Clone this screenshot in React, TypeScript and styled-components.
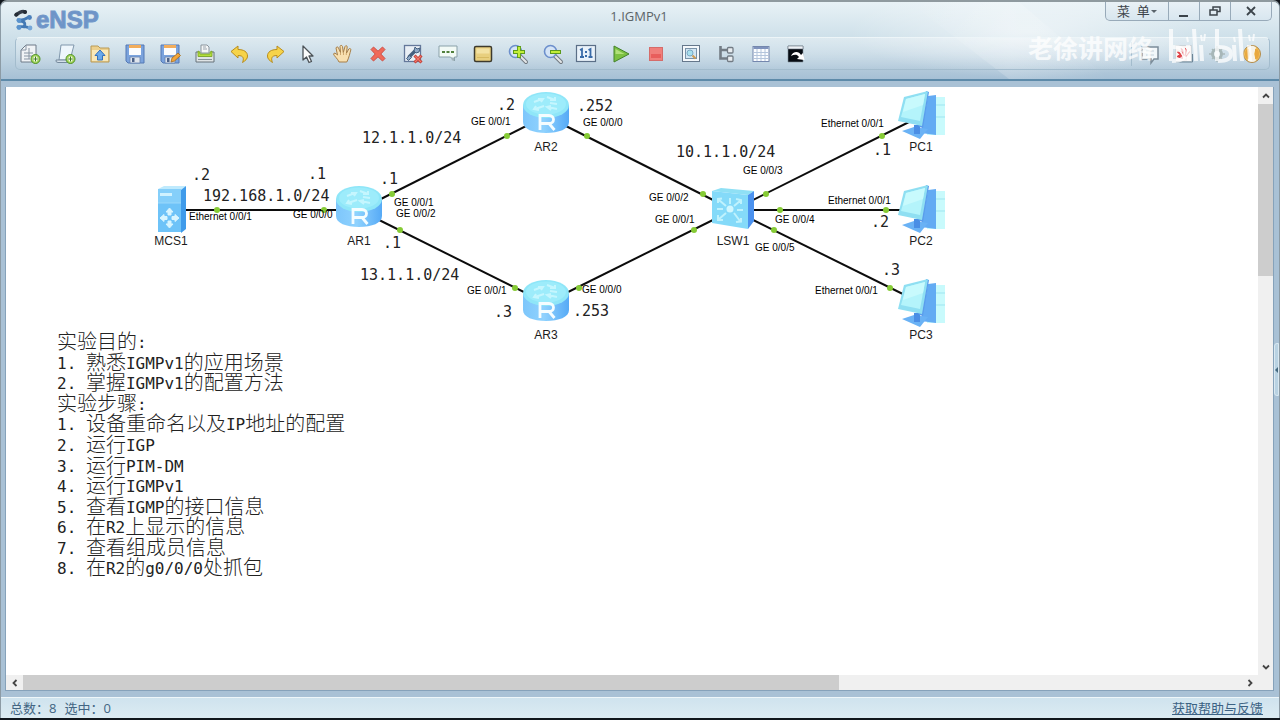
import React from "react";
import styled, { createGlobalStyle } from "styled-components";

const GlobalStyle = createGlobalStyle`
  * { box-sizing: border-box; }
  body { margin: 0; background: #10161c; font-family: "Open Sans", "Noto Sans CJK SC", sans-serif; }
  button { font: inherit; color: inherit; }
`;

const Window = styled.div`
  display: flex;
  flex-direction: column;
  height: 100vh;
  min-height: 520px;
  padding-bottom: 2px;
  background: #10161c;
`;

const Frame = styled.div`
  flex: 1;
  display: flex;
  flex-direction: column;
  min-height: 0;
  overflow: hidden;
  border: 1px solid #8c9ba5;
  border-top: 2px solid #8f9a9f;
  border-bottom: 0;
  border-radius: 7px 7px 0 0;
  background: #a9c1d5;
`;

const Header = styled.header`
  position: relative;
  flex: none;
  height: 79px;
  border-bottom: 2px solid #5d8aa9;
  background: linear-gradient(#e8f2f6 0, #cfe1ea 34px, #c3d7e4 52px, #b3cadb 66px, #a6c0d5 77px);
`;

const Decor = styled.svg`
  position: absolute;
  top: 0;
  right: 0;
  width: 640px;
  height: 77px;
`;

const TitleBar = styled.div`
  position: relative;
  display: grid;
  grid-template-columns: 1fr auto 1fr;
  height: 35px;
  padding: 0 7px 0 5px;
`;

const Brand = styled.div`
  display: flex;
  align-items: center;
  gap: 2px;
  padding-left: 8px;
  font: 900 24px/35px "Liberation Sans", Arial, sans-serif;
  color: #6e94c8;
  -webkit-text-stroke: 1px #7398c9;
`;

const Title = styled.h1`
  margin: 0;
  font-size: 13px;
  font-weight: 400;
  line-height: 29px;
  color: #5c6468;
`;

const Controls = styled.div`
  justify-self: end;
  display: flex;
  height: 19px;
  border: 1px solid #98aab9;
  border-top: 0;
  border-radius: 0 0 5px 5px;
  background: linear-gradient(#e9f1f6, #d8e6ef);
  overflow: hidden;
`;

const Control = styled.button<{ $w: number }>`
  display: flex;
  align-items: center;
  justify-content: center;
  width: ${(p) => p.$w}px;
  padding: 0;
  border: 0;
  border-right: 1px solid #98aab9;
  background: none;
  color: #3d444a;
  font-size: 13px;
  line-height: 18px;
  white-space: pre;
  &:last-child { border-right: 0; }
`;

const Toolbar = styled.div`
  position: relative;
  display: flex;
  align-items: center;
  height: 33px;
  margin: 0 9px 0 14px;
  padding: 0 5px 0 2px;
  border: 1px solid #a3bccd;
  border-top-color: #edf5f8;
  border-radius: 5px;
  background: linear-gradient(#ffffff50, #ffffff08);
`;

const Group = styled.div<{ $line?: boolean; $gap?: number }>`
  display: flex;
  gap: ${(p) => p.$gap ?? 11}px;
  & + & {
    margin-left: 4px;
    padding-left: 4px;
    border-left: 1px solid ${(p) => (p.$line ? "#9fb5c6" : "transparent")};
  }
`;

const SideGroup = styled(Group)`
  && {
    margin-left: auto;
    padding-left: 6px;
    border-left: 1px solid #a3bccd;
  }
`;

const Tool = styled.button`
  display: flex;
  align-items: center;
  justify-content: center;
  width: 24px;
  height: 24px;
  padding: 0;
  border: 0;
  background: none;
`;

const Watermark = styled.div`
  position: absolute;
  right: 20px;
  top: 23px;
  display: flex;
  align-items: center;
  gap: 14px;
  font: 700 25px/44px "Noto Sans CJK SC", sans-serif;
  color: #ffffff;
  opacity: 0.75;
  pointer-events: none;
`;

const Body = styled.main`
  position: relative;
  flex: 1;
  min-height: 0;
  display: grid;
  grid-template: minmax(0, 1fr) 15px / minmax(0, 1fr) 15px;
  margin: 6px 5px 6px 4px;
  border: 1px solid #86a2ba;
  border-top: 0;
  background: #ffffff;
`;

const Canvas = styled.section`
  position: relative;
  overflow: hidden;
  background: #ffffff;
`;

const Links = styled.svg`
  position: absolute;
  inset: 0;
  width: 100%;
  height: 100%;
`;

const Node = styled.div<{ $x: number; $y: number }>`
  position: absolute;
  left: ${(p) => p.$x}px;
  top: ${(p) => p.$y}px;
  width: 80px;
  margin-left: -40px;
  display: flex;
  flex-direction: column;
  align-items: center;
  font: 12px/16px "Liberation Sans", Arial, sans-serif;
  color: #1c1c1c;
`;

const PortLabel = styled.span<{ $x: number; $y: number }>`
  position: absolute;
  left: ${(p) => p.$x}px;
  top: ${(p) => p.$y}px;
  margin-top: -8px;
  font: 10px/16px "Liberation Sans", Arial, sans-serif;
  color: #000000;
  white-space: nowrap;
`;

const NetLabel = styled(PortLabel)`
  font: 15px/16px "DejaVu Sans Mono", monospace;
  color: #222222;
`;

const Notes = styled.div`
  position: absolute;
  left: 51px;
  top: 245px;
  display: grid;
  grid-template-rows: repeat(12, minmax(0, 1fr));
  height: 247px;
  font: 300 20px/20px "Liberation Sans", "Noto Sans CJK SC", sans-serif;
  color: #222222;
`;

const NoteLine = styled.div`
  white-space: pre;
`;

const Latin = styled.span`
  font: 16px/16px "DejaVu Sans Mono", monospace;
  vertical-align: 1px;
`;

const ScrollTrack = styled.div<{ $vertical?: boolean }>`
  display: flex;
  flex-direction: ${(p) => (p.$vertical ? "column" : "row")};
  justify-content: space-between;
  background: #f0f0f0;
`;

const ScrollRail = styled.div<{ $vertical?: boolean }>`
  flex: 1;
  display: flex;
  flex-direction: ${(p) => (p.$vertical ? "column" : "row")};
`;

const Thumb = styled.div<{ $share: string }>`
  flex: 0 0 ${(p) => p.$share};
  background: #cdcdcd;
`;

const ScrollButton = styled.button`
  display: flex;
  align-items: center;
  justify-content: center;
  flex: 0 0 17px;
  padding: 0;
  border: 0;
  background: none;
`;

const Splitter = styled.button`
  position: absolute;
  right: -6px;
  top: 256px;
  width: 5px;
  height: 53px;
  padding: 0;
  border: 1px solid #d9e8f1;
  border-radius: 3px 0 0 3px;
  background: #b9d2e2;
  display: flex;
  align-items: center;
  justify-content: center;
`;

const StatusBar = styled.footer`
  flex: none;
  display: flex;
  justify-content: space-between;
  height: 21px;
  padding: 0 16px 0 9px;
  border-top: 1px solid #eef6f9;
  background: linear-gradient(#cfe3ee, #dcebf2);
  color: #426583;
  font: 13px/21px "Open Sans", "Noto Sans CJK SC", sans-serif;
`;

const Counts = styled.div`
  display: flex;
  gap: 8px;
`;

const HelpLink = styled.a`
  color: #3c6284;
`;

const Svg = ({ children, size = 22 }: { children: React.ReactNode; size?: number }) => (
  <svg width={size} height={size} viewBox="0 0 22 22" fill="none" aria-hidden="true">
    {children}
  </svg>
);

const PlusBadge = () => (
  <>
    <circle cx="16.5" cy="16" r="4.5" fill="#a5d65c" stroke="#4d8f25" />
    <path d="M16.5 13.4v5.2M13.9 16h5.2" stroke="#fff" strokeWidth="2.6" />
    <path d="M16.5 13.6v4.8M14.1 16h4.8" stroke="#3d7a1d" strokeWidth="1" />
  </>
);

const Floppy = ({ children }: { children?: React.ReactNode }) => (
  <Svg>
    <path d="M2 2h18v18H4l-2-2z" fill="#7ba3dd" stroke="#5478b4" />
    <path d="M5 2h12v3H5z" fill="#f2ad5c" />
    <path d="M5 5h12v7H5z" fill="#fbfcfd" />
    <path d="M6 14h10v6H6z" fill="#dfe5ec" stroke="#6483b3" strokeWidth=".8" />
    <path d="M8 15h2.5v4H8z" fill="#4c6288" />
    {children}
  </Svg>
);

const Magnifier = ({ plus }: { plus?: boolean }) => (
  <Svg>
    <path d="M13 13l6 6" stroke="#737b82" strokeWidth="4" strokeLinecap="round" />
    <path d="M13 13l6 6" stroke="#e4e7e9" strokeWidth="2" strokeLinecap="round" />
    <circle cx="8.5" cy="8.5" r="6" fill="#d4e4f6" stroke="#6c8fcc" strokeWidth="1.6" />
    <path d={plus ? "M12 3v12M6 9h12" : "M8 9h11"} stroke="#5d9b1d" strokeWidth="4" />
    <path d={plus ? "M12 4v10M7 9h10" : "M9 9h9"} stroke="#c2ee38" strokeWidth="2.2" />
  </Svg>
);

const Undo = ({ flip }: { flip?: boolean }) => (
  <Svg>
    <path
      transform={flip ? "matrix(-1 0 0 1 22 0)" : undefined}
      d="M2 8.5L9 3v3.500c6 0 9.500 2.500 9.500 6.500 0 3-2 4.500-5 6.500 1.500-3.500 1.500-7-4.500-7V15z"
      fill="#f6d34a"
      stroke="#b98d1d"
      strokeLinejoin="round"
    />
  </Svg>
);

const fileTools: [string, React.ReactNode][] = [
  ["New topology", <Svg>
    <path d="M7 2h10v17H2V7z" fill="#f0f3f6" stroke="#6f7b88" />
    <path d="M7 2v5H2M5 10h9M5 13h9M5 16h6M10 5v11" stroke="#8794a3" />
    <PlusBadge />
  </Svg>],
  ["New paper", <Svg>
    <path d="M7 2h13l-4 15H5z" fill="#eef6fc" stroke="#8097ac" />
    <path d="M2 17h13v2.500H4Q1.500 19.500 2 17z" fill="#d4e0ea" stroke="#75899c" />
    <PlusBadge />
  </Svg>],
  ["Open", <Svg>
    <path d="M2 3h7l2 2h9v14H2z" fill="#ecd08d" stroke="#b99a57" />
    <path d="M3 7h16v11H3z" fill="#f8e8b9" />
    <path d="M11 7l5 5.500h-2.500V17h-5v-4.500H6z" fill="#69a9ec" stroke="#3370bb" />
  </Svg>],
  ["Save", <Floppy />],
  ["Save as", <Floppy>
    <path d="M12 19l1-4 6-5 2.500 2.500-6 5.500z" fill="#f3a63b" stroke="#a3691d" strokeWidth=".8" />
  </Floppy>],
  ["Print", <Svg>
    <path d="M7 10V2h6l2 2v6z" fill="#f4f6f7" stroke="#8a949c" />
    <path d="M9 4h3M9 6h4" stroke="#9aa4ac" />
    <path d="M2 9h3v4h12V9h3v10H2z" fill="#dfe4e6" stroke="#66737b" strokeLinejoin="round" />
    <path d="M4 8v5.500h14V8l-2 1v2H6V9z" fill="#b3df3a" stroke="#769f26" strokeWidth=".8" />
    <path d="M4 16.500h14" stroke="#87939a" />
  </Svg>],
  ["Undo", <Undo />],
  ["Redo", <Undo flip />],
];

const editTools: [string, React.ReactNode][] = [
  ["Select", <Svg>
    <path d="M6 3v14l3.500-3 2.500 5.500 2.500-1-2.500-5.500H16z" fill="#fbfcfc" stroke="#4c5358" strokeWidth="1.300" strokeLinejoin="round" />
  </Svg>],
  ["Pan", <Svg>
    <path d="M7 19c-1-3-5-6-5.500-8 .5-1.500 2-1 4 1L4 5c.5-1.500 2-1.500 2.500 0L8.500 9.500 8 3.500c.3-1.500 2-1.500 2.500 0l.8 6L13 3.500c.6-1.300 2.200-1 2.200.4L14.500 10l2.300-4c1-1 2.300-.4 2 .9-1 3.500-1.800 8-4 12.100z" fill="#f8e0b0" stroke="#a77f48" strokeLinejoin="round" />
    <path d="M8.500 10v2M11.500 10v2M14.300 10v2" stroke="#c39a60" strokeWidth=".8" />
  </Svg>],
  ["Delete", <Svg>
    <path d="M4 6.500L6.500 4 11 8.200 15.500 4 18 6.500 13.800 11 18 15.500 15.500 18 11 13.800 6.500 18 4 15.500 8.200 11z" fill="#f06a5a" stroke="#cd5148" strokeLinejoin="round" />
  </Svg>],
  ["Delete links", <Svg>
    <rect x="2.500" y="2.500" width="16" height="16" fill="#e9eff5" stroke="#64789a" strokeWidth="1.300" />
    <path d="M6.500 14.500l7-7" stroke="#44607f" strokeWidth="3.400" />
    <path d="M4.500 15.500l3-3 2 2-3 3zM12 8l1-4 2 2 3-1-1 4-3 1z" fill="#8ea8c6" stroke="#44607f" />
    <path d="M12.500 12.500l7 7m0-7l-7 7" stroke="#c43a31" strokeWidth="3" />
    <path d="M13 13l6 6m0-6l-6 6" stroke="#f0796b" strokeWidth="1.200" />
  </Svg>],
  ["Text", <Svg>
    <path d="M2 3h18v11h-2.500v4l-4-4H2z" fill="#f2faf6" stroke="#8aa1a9" />
    <path d="M5 9h3M9.500 9h3M14 9h3" stroke="#51803c" strokeWidth="2.200" />
    <path d="M14 14.500h3v3h-2z" fill="#a3b2ba" />
  </Svg>],
  ["Palette", <Svg>
    <rect x="2.500" y="3.500" width="17" height="15" rx="1.500" fill="#e8cf7e" stroke="#3d3a2d" strokeWidth="1.500" />
    <path d="M4.500 5.500h13v5h-13z" fill="#f3e2a3" />
    <path d="M5 14.500h12" stroke="#d7ba62" />
  </Svg>],
  ["Zoom in", <Magnifier plus />],
  ["Zoom out", <Magnifier />],
];

const viewTools: [string, React.ReactNode][] = [
  ["Actual size", <Svg>
    <rect x="1.500" y="2.500" width="19" height="16" fill="#e9f2fa" stroke="#5b6f87" strokeWidth="1.200" />
    <path d="M5 7l2-1v8M5 14h4M13.500 7l2-1v8M13.500 14h4" stroke="#3a6ca9" strokeWidth="1.800" />
    <path d="M10 8h2v2h-2zM10 12h2v2h-2z" fill="#3a6ca9" />
  </Svg>],
  ["Start devices", <Svg>
    <path d="M4 3l15 8-15 8z" fill="#7cc142" stroke="#43822b" strokeLinejoin="round" />
    <path d="M5.500 6l9 5h-9z" fill="#b2e07b" />
  </Svg>],
  ["Stop devices", <Svg>
    <rect x="4.500" y="4.500" width="13" height="13" fill="#f07f7b" stroke="#d56c6a" />
    <path d="M6 11h10v4H6z" fill="#e85e5c" />
  </Svg>],
  ["Capture", <Svg>
    <rect x="2.500" y="2.500" width="17" height="16" fill="#f4f8fb" stroke="#65778b" />
    <rect x="5.500" y="5.500" width="11" height="10" fill="#d2e6f3" stroke="#7992a8" />
    <circle cx="10" cy="10" r="3" fill="#a8e0ee" stroke="#7aa9c4" />
    <path d="M12.500 12.500l3 3" stroke="#cf9b50" strokeWidth="2" />
  </Svg>],
  ["Show interfaces", <Svg>
    <path d="M5.500 3v12.500H12M5.500 7H12" stroke="#737c85" strokeWidth="2.600" />
    <rect x="12.500" y="4.500" width="5.500" height="5.500" rx="1" fill="#e8edf1" stroke="#737c85" strokeWidth="1.300" />
    <rect x="12.500" y="13" width="5.500" height="5.500" rx="1" fill="#e8edf1" stroke="#737c85" strokeWidth="1.300" />
  </Svg>],
  ["Show grid", <Svg>
    <rect x="3" y="3.500" width="16" height="15" fill="#fbfdff" stroke="#7487ad" />
    <path d="M3.500 5h15" stroke="#7f93bd" strokeWidth="2" />
    <path d="M7 6v12M11 6v12M15 6v12M4 9.500h14M4 12.500h14M4 15.500h14" stroke="#b4c5dc" />
  </Svg>],
  ["Open terminals", <Svg>
    <path d="M3 3h15v16H3z" fill="#060b12" stroke="#7a8996" strokeWidth=".6" />
    <path d="M3 3h15v3H3z" fill="#eef3f7" stroke="#64717d" strokeWidth=".6" />
    <path d="M6 13c2-5 8-5 10-1l2-2 1.500 7-7.500-1 2-2c-2-3-5-2.500-8-1z" fill="#fff" />
  </Svg>],
];

const sideTools: [string, React.ReactNode][] = [
  ["Forum", <Svg>
    <path d="M3 4h16v12h-4l-3 4v-4H3z" fill="#f2f7fa" stroke="#7c8d9a" strokeWidth="1.500" />
    <path d="M7 8h8M7 12h8" stroke="#c1d0da" />
  </Svg>],
  ["Website", <Svg>
    <rect x="2.500" y="2.500" width="16" height="16" fill="#f9f4f3" stroke="#ccd5da" />
    <path d="M3 19h16.500V11" stroke="#6c8597" />
    <path d="M4 13.500l2.500-1.500 3 3.500zM4.500 9l2 .5 3 5zM8 5.500l1.500 1 1.500 6zM12.500 5.500l1 1-1 6zM16.500 8.500l-.5 1.500-3 3.500z" fill="#df3c43" stroke="#df3c43" />
  </Svg>],
  ["Settings", <Svg>
    <circle cx="10" cy="11" r="4.500" stroke="#a7b7b8" strokeWidth="3" />
    <path d="M10 3v16M2 11h16M5 6l10 10M5 16L15 6" stroke="#a9b8b9" strokeWidth="1.300" />
    <circle cx="10" cy="11" r="3" fill="#eaf1f3" />
  </Svg>],
  ["Help", <Svg>
    <circle cx="11" cy="11" r="8.500" fill="#f3c35e" stroke="#b38b4c" />
    <path d="M7 4.500Q11 1 15 4.500L13 11l2 6.500q-4 3-8 0L9 11z" fill="#f6f2e7" />
    <path d="M5 6.500q-2 4.500 0 9l3 .5V6zM17 6.500q2 4.500 0 9l-3 .5V6z" fill="#e9a83e" />
  </Svg>],
];

const Tools = ({ items }: { items: [string, React.ReactNode][] }) => (
  <>
    {items.map(([name, icon]) => (
      <Tool key={name} aria-label={name} title={name}>{icon}</Tool>
    ))}
  </>
);

const Router = () => (
  <svg width="48" height="48" viewBox="0 0 48 48" aria-hidden="true">
    <defs>
      <linearGradient id="router" x2="1"><stop stopColor="#7dc6fb" /><stop offset=".45" stopColor="#8fd2fe" /><stop offset="1" stopColor="#56aaf6" /></linearGradient>
    </defs>
    <path d="M1 14v17c0 7 10 11 23 11s23-4 23-11V14z" fill="url(#router)" />
    <ellipse cx="24" cy="14" rx="23" ry="13" fill="#8fe6f8" />
    <ellipse cx="24" cy="13" rx="20" ry="10.500" fill="#9decfb" />
    <path d="M12 11l8-3M16 8l5 0-2 3M25 6l8 3M33 6v3h-5M13 18l9-3M14 15l-2 3 5 1M26 16l9 2M35 13l-7-1M29 15l-4 1 4 3" stroke="#c5f6fe" strokeWidth="2" fill="none" />
    <path d="M18 39V24.500H27c6 0 6 8 0 8h-9M27 32.500l5.500 6.500" stroke="#f5fdff" strokeWidth="2.800" fill="none" />
  </svg>
);

const Server = () => (
  <svg width="48" height="48" viewBox="0 0 48 48" aria-hidden="true">
    <path d="M11 4l6-3h22l-5 5H11z" fill="#bfeafd" />
    <path d="M34 5l5-4v43l-5 4z" fill="#3f9bea" />
    <path d="M11 4h23v43H11z" fill="#6ec3f8" />
    <path d="M11 4h23v14H11z" fill="#85cffa" />
    <path d="M13 8h12v3H13z" fill="#d0f2ff" />
    <path d="M11 18h23" stroke="#9ad8fb" />
    <path d="M22.500 23l3.500 4h-2v3h-3v-3h-2zM22.500 43l3.500-4h-2v-3h-3v3h-2zM13 33l4-3.500v2h3v3h-3v2zM32 33l-4-3.500v2h-3v3h3v2z" fill="#d8f5ff" stroke="#d8f5ff" />
  </svg>
);

const Switch = () => (
  <svg width="48" height="48" viewBox="0 0 48 48" aria-hidden="true">
    <path d="M3 6l9-3 33 3-6 4z" fill="#8fe0f5" />
    <path d="M39 10l6-4v30l-6 8z" fill="#4b92ef" />
    <path d="M3 6l36 4v34L3 38z" fill="#84daf9" />
    <circle cx="21" cy="24" r="3.500" fill="#d0f7ff" />
    <path d="M17 21l-7-6M9 18v-4l4-.5M25 21l6-5M27 14l5 1v4M17 28l-7 6M9 30v5h5M25 28l6 8M27 37l5-.5V33M21 19v-6M14 24H8M28 25h6" stroke="#bff2fd" strokeWidth="2" fill="none" />
  </svg>
);

const Computer = () => (
  <svg width="48" height="48" viewBox="0 0 48 48" aria-hidden="true">
    <path d="M30 6h18v38H30z" fill="#c8fafc" />
    <path d="M39 14h9M39 26h9" stroke="#9ee5f0" strokeWidth="1" />
    <path d="M31 5l8-1v40l-15-2z" fill="#63abf3" />
    <path d="M5 40l12-4 14 2-8 10z" fill="#6ab2f5" />
    <path d="M17 34h6v9h-6z" fill="#4a8ee5" />
    <path d="M29 0l3 1-6 36-4-1z" fill="#5a9cec" />
    <path d="M7 6L31 0l-6 35-24-5z" fill="#8fdff2" />
    <path d="M9 8l19-5-5 27-19-4z" fill="#b4f4fb" />
    <path d="M9 8l19-5-2 11-20 7z" fill="#c8fafd" />
  </svg>
);

const nodes: [string, number, number, React.ReactNode][] = [
  ["MCS1", 165, 98, <Server />],
  ["AR1", 353, 98, <Router />],
  ["AR2", 540, 4, <Router />],
  ["AR3", 540, 192, <Router />],
  ["LSW1", 727, 98, <Switch />],
  ["PC1", 915, 4, <Computer />],
  ["PC2", 915, 98, <Computer />],
  ["PC3", 915, 192, <Computer />],
];

const links = [
  [165, 123, 353, 123],
  [353, 123, 540, 29],
  [353, 123, 540, 216],
  [540, 29, 727, 123],
  [540, 216, 727, 123],
  [727, 123, 915, 29],
  [727, 123, 915, 123],
  [727, 123, 915, 216],
];

const ports = [
  [211, 123], [318, 123], [386, 107], [501, 49], [581, 49], [697, 107], [394, 143], [509, 201],
  [573, 201], [688, 143], [760, 107], [876, 49], [774, 123], [880, 123], [768, 143], [884, 201],
];

const portLabels: [string, number, number][] = [
  ["Ethernet 0/0/1", 183, 130],
  ["GE 0/0/0", 287, 128],
  ["GE 0/0/1", 388, 116],
  ["GE 0/0/2", 390, 127],
  ["GE 0/0/1", 465, 35],
  ["GE 0/0/0", 577, 36],
  ["GE 0/0/1", 461, 204],
  ["GE 0/0/0", 576, 203],
  ["GE 0/0/2", 643, 111],
  ["GE 0/0/1", 649, 133],
  ["GE 0/0/3", 737, 84],
  ["GE 0/0/4", 769, 133],
  ["GE 0/0/5", 749, 161],
  ["Ethernet 0/0/1", 815, 37],
  ["Ethernet 0/0/1", 822, 114],
  ["Ethernet 0/0/1", 809, 204],
];

const netLabels: [string, number, number][] = [
  [".2", 186, 88],
  [".1", 302, 87],
  ["192.168.1.0/24", 197, 109],
  [".1", 374, 92],
  [".1", 377, 156],
  ["12.1.1.0/24", 356, 51],
  ["13.1.1.0/24", 354, 188],
  [".2", 491, 18],
  [".252", 571, 19],
  [".3", 488, 225],
  [".253", 567, 224],
  ["10.1.1.0/24", 670, 65],
  [".1", 867, 63],
  [".2", 865, 135],
  [".3", 876, 183],
];

const notes = [
  "实验目的:",
  "1. 熟悉IGMPv1的应用场景",
  "2. 掌握IGMPv1的配置方法",
  "实验步骤:",
  "1. 设备重命名以及IP地址的配置",
  "2. 运行IGP",
  "3. 运行PIM-DM",
  "4. 运行IGMPv1",
  "5. 查看IGMP的接口信息",
  "6. 在R2上显示的信息",
  "7. 查看组成员信息",
  "8. 在R2的g0/0/0处抓包",
];

const splitScripts = (text: string) =>
  text.split(/([\x20-\x7e]+)/).map((part, i) => (i % 2 ? <Latin key={i}>{part}</Latin> : part));

const Chevron = ({ turn, label }: { turn: number; label: string }) => (
  <ScrollButton aria-label={label}>
    <svg width="10" height="10" viewBox="0 0 10 10" aria-hidden="true">
      <path d="M2 6.500l3-3 3 3" transform={`rotate(${turn} 5 5)`} stroke="#454545" strokeWidth="1.800" fill="none" />
    </svg>
  </ScrollButton>
);

export default function App() {
  return (
    <Window>
      <GlobalStyle />
      <Frame>
        <Header>
          <Decor viewBox="0 0 640 77" preserveAspectRatio="none" aria-hidden="true">
            <defs>
              <radialGradient id="glow"><stop stopColor="#fff" stopOpacity=".55" /><stop offset="1" stopColor="#fff" stopOpacity="0" /></radialGradient>
              <linearGradient id="beam" x2="1"><stop stopColor="#fff" stopOpacity="0" /><stop offset=".5" stopColor="#fff" stopOpacity=".18" /><stop offset="1" stopColor="#fff" stopOpacity="0" /></linearGradient>
            </defs>
            <ellipse cx="390" cy="30" rx="180" ry="46" fill="url(#glow)" />
            <path d="M270 0h110l90 77H370z" fill="url(#beam)" />
          </Decor>
          <TitleBar>
            <Brand>
              <svg width="20" height="22" viewBox="0 0 20 22" aria-hidden="true">
                <path d="M2 6Q8 1 11 3" stroke="#333b47" strokeWidth="3.500" fill="none" strokeLinecap="round" />
                <path d="M4 11Q9 12 15 8M5 12Q13 12 10 18M4 18Q10 17 16 19" stroke="#4379b4" strokeWidth="2.800" strokeLinecap="round" fill="none" />
                <circle cx="2.500" cy="5.500" r="2" fill="#252c36" /><circle cx="11" cy="3" r="2" fill="#252c36" />
                <circle cx="5" cy="11.500" r="2.400" fill="#5a93cd" /><circle cx="15.500" cy="8.500" r="2.400" fill="#4a7fbb" />
                <circle cx="5" cy="18.500" r="2.400" fill="#5a93cd" /><circle cx="16" cy="19" r="2.400" fill="#76a7d8" />
              </svg>
              eNSP
            </Brand>
            <Title>1.IGMPv1</Title>
            <Controls>
              <Control $w={63}>菜  单<svg width="7" height="5" aria-hidden="true"><path d="M1 1h6L4 4z" fill="#59636b" /></svg></Control>
              <Control $w={31} aria-label="Minimize"><svg width="10" height="12" aria-hidden="true"><path d="M0 11h9" stroke="#3c444b" strokeWidth="2" /></svg></Control>
              <Control $w={31} aria-label="Restore"><svg width="12" height="10" aria-hidden="true"><path d="M4 4V1h7v4.500H8M1 4h7v5H1z" fill="none" stroke="#3c444b" strokeWidth="1.500" /></svg></Control>
              <Control $w={40} aria-label="Close"><svg width="10" height="10" aria-hidden="true"><path d="M1 1l8 8M9 1L1 9" stroke="#3c444b" strokeWidth="1.800" /></svg></Control>
            </Controls>
          </TitleBar>
          <Toolbar role="toolbar" aria-label="Main">
            <Group><Tools items={fileTools} /></Group>
            <Group><Tools items={editTools} /></Group>
            <Group $line><Tools items={viewTools} /></Group>
            <SideGroup $gap={10}><Tools items={sideTools} /></SideGroup>
          </Toolbar>
          <Watermark>
            老徐讲网络
            <svg width="92" height="40" viewBox="0 0 92 40" fill="none" stroke="#fff" aria-label="bilibili">
              <path d="M4 2v32M27 2l2 32M50 2v32M73 2l2 32" strokeWidth="4" />
              <path d="M5 20q13 0 13 7t-13 7M51 20q13 0 13 7t-13 7" strokeWidth="4" />
              <path d="M21 18l1 16M34 18l1 16M67 18l1 16M82 18l1 16" strokeWidth="4" />
              <path d="M20 10l1 5M34 8l1 6M38 7l-1 7M67 10l1 5M82 8l1 6M87 7l-1 7" strokeWidth="2" />
            </svg>
          </Watermark>
        </Header>
        <Body>
          <Canvas aria-label="Topology">
            <Links aria-hidden="true">
              {links.map(([x1, y1, x2, y2], i) => (
                <line key={i} x1={x1} y1={y1} x2={x2} y2={y2} stroke="#0c0c0c" strokeWidth="2" />
              ))}
              {ports.map(([cx, cy], i) => (
                <circle key={i} cx={cx} cy={cy} r="3" fill="#86cb35" />
              ))}
            </Links>
            {nodes.map(([name, x, y, icon]) => (
              <Node key={name} $x={x} $y={y}>{icon}{name}</Node>
            ))}
            {portLabels.map(([text, x, y], i) => (
              <PortLabel key={i} $x={x} $y={y}>{text}</PortLabel>
            ))}
            {netLabels.map(([text, x, y], i) => (
              <NetLabel key={i} $x={x} $y={y}>{text}</NetLabel>
            ))}
            <Notes>
              {notes.map((line) => (
                <NoteLine key={line}>{splitScripts(line)}</NoteLine>
              ))}
            </Notes>
          </Canvas>
          <ScrollTrack $vertical>
            <Chevron turn={0} label="Scroll up" />
            <ScrollRail $vertical><Thumb $share="31%" /></ScrollRail>
            <Chevron turn={180} label="Scroll down" />
          </ScrollTrack>
          <ScrollTrack>
            <Chevron turn={270} label="Scroll left" />
            <ScrollRail><Thumb $share="67%" /></ScrollRail>
            <Chevron turn={90} label="Scroll right" />
          </ScrollTrack>
          <ScrollTrack />
          <Splitter aria-label="Toggle side panel">
            <svg width="3" height="6" aria-hidden="true"><path d="M3 0v6L0 3z" fill="#45697f" /></svg>
          </Splitter>
        </Body>
        <StatusBar>
          <Counts><span>总数：8</span><span>选中：0</span></Counts>
          <HelpLink href="#help">获取帮助与反馈</HelpLink>
        </StatusBar>
      </Frame>
    </Window>
  );
}
